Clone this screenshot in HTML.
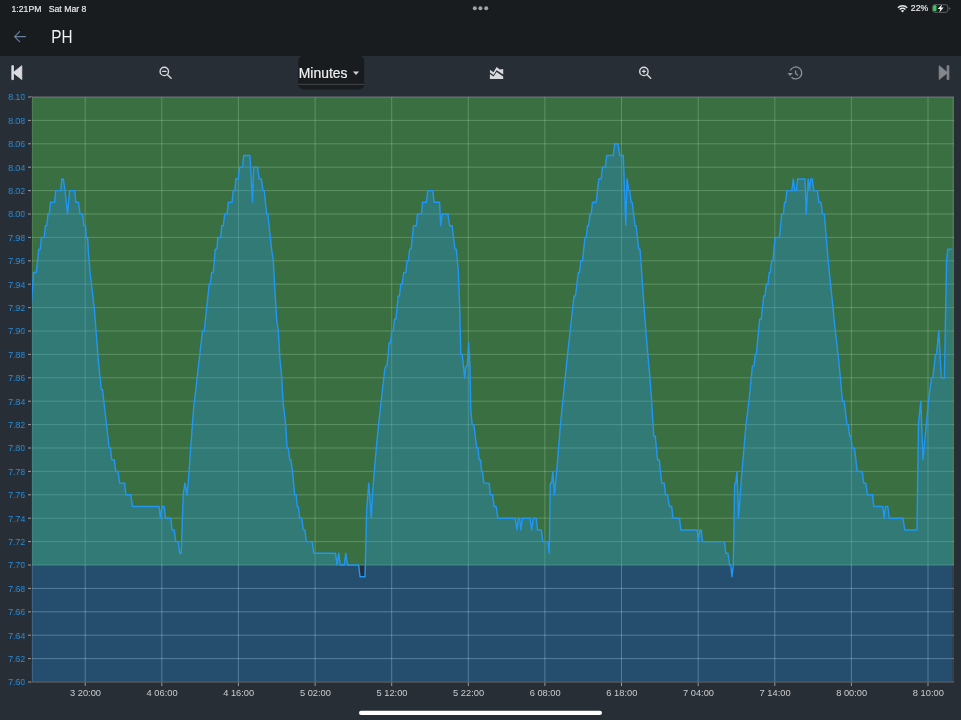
<!DOCTYPE html>
<html><head><meta charset="utf-8"><style>
html,body{margin:0;padding:0;width:961px;height:720px;overflow:hidden;background:#282e35;}
body{position:relative;font-family:"Liberation Sans",sans-serif;}
svg{position:absolute;left:0;top:0;will-change:transform;}
text{opacity:0.999;}
</style></head><body>
<svg width="961" height="720" viewBox="0 0 961 720">
<defs>
<clipPath id="plot"><rect x="32" y="97" width="922" height="585"/></clipPath>
<clipPath id="upper"><rect x="32" y="97" width="922" height="468"/></clipPath>
<clipPath id="lower"><rect x="32" y="565" width="922" height="117"/></clipPath>
</defs>
<rect x="0" y="0" width="961" height="56" fill="#181c1f"/>
<!-- status bar -->
<text x="11.5" y="11.5" font-size="8.7" fill="#e8e8e8" stroke="#e8e8e8" stroke-width="0.18">1:21PM</text>
<text x="48.7" y="11.5" font-size="8.7" fill="#e8e8e8" stroke="#e8e8e8" stroke-width="0.18">Sat Mar 8</text>
<circle cx="474.8" cy="8.3" r="2" fill="#a0a4a8"/><circle cx="480.4" cy="8.3" r="2" fill="#a0a4a8"/><circle cx="486.2" cy="8.3" r="2" fill="#a0a4a8"/>
<!-- header -->
<path d="M25.5,36.6 H14.6 M19.6,31.6 L14.6,36.6 L19.6,41.6" fill="none" stroke="#6a819b" stroke-width="1.2" stroke-linecap="round" stroke-linejoin="round"/>
<text x="51.3" y="43.1" font-size="18" fill="#f2f2f2" textLength="21.2" lengthAdjust="spacingAndGlyphs">PH</text>
<!-- status right -->
<g fill="none" stroke="#e8e8e8" stroke-width="1.4">
<path d="M897.9,7.7 A6.6,6.6 0 0 1 907.2,7.7"/>
<path d="M899.65,9.5 A4.1,4.1 0 0 1 905.45,9.5"/>
</g>
<path d="M902.55,12.4 L900.9,10.75 A2.3,2.3 0 0 1 904.2,10.75 Z" fill="#e8e8e8"/>
<text x="910.8" y="11.4" font-size="8.7" fill="#e8e8e8" stroke="#e8e8e8" stroke-width="0.18">22%</text>
<rect x="932.6" y="4.6" width="15.3" height="7.8" rx="2.3" fill="none" stroke="#5c5f63" stroke-width="1"/>
<path d="M949,7.2 L950.9,8.45 L949,9.7 Z" fill="#5c5f63"/>
<rect x="933.1" y="5.2" width="3.4" height="6" rx="1" fill="#34c759"/>
<path d="M942.4,3.9 L937.7,9 L940.3,9 L939.1,12.7 L943.6,7.5 L941,7.5 Z" fill="#f8f8f8" stroke="#181c1f" stroke-width="0.7" paint-order="stroke" stroke-linejoin="round"/>
<!-- toolbar -->
<rect x="0" y="56" width="961" height="41" fill="#282e35"/>
<path d="M11.8,65.7 H13.5 V79.6 H11.8 Z M13,72.65 L21.8,65.7 V79.6 Z" fill="#dcdce2" stroke="#dcdce2" stroke-width="0.8" stroke-linejoin="round"/>
<g fill="none" stroke="#d8d8dc" stroke-width="1.4" stroke-linecap="round">
<circle cx="164.3" cy="71.4" r="4.2"/><path d="M167.3,74.4 L171.1,78.2"/><path d="M162.7,71.4 H165.9" stroke-width="1.4"/>
<circle cx="643.9" cy="71.4" r="4.2"/><path d="M646.9,74.4 L650.7,78.2"/><path d="M642.4,71.4 H645.4 M643.9,69.9 V72.9" stroke-width="1.1"/>
</g>
<path d="M489.9,69.7 L493.5,72.3 L496.6,66.9 L499.8,69.4 L503.2,68.9 L503.2,74.6 L496.6,70.2 L493.5,75 L489.9,72.4 Z M489.9,73.9 L493.5,76.5 L496.6,71.9 L503.2,76.5 L503.2,79 L489.9,79 Z" fill="#d8d8de"/>
<g fill="none" stroke="#8d9094" stroke-width="1.3">
<path d="M790.2,70.6 A6,6 0 1 1 791.5,77.2"/>
<path d="M795.6,70.4 V73.5 L798,75.4"/>
</g>
<path d="M787.5,73 L792.8,73 L790.1,75.9 Z" fill="#8d9094"/>
<path d="M939.2,65.7 L947.6,72.65 L939.2,79.6 Z M947.1,65.7 H948.9 V79.6 H947.1 Z" fill="#84878c" stroke="#84878c" stroke-width="0.8" stroke-linejoin="round"/>
<!-- dropdown -->
<rect x="298.3" y="56" width="65.8" height="33.5" rx="5" fill="#181c1f"/>
<rect x="298.3" y="83.8" width="65.8" height="1" fill="#45484d"/>
<text x="298.8" y="77.9" font-size="13.9" fill="#f0f0f0" stroke="#f0f0f0" stroke-width="0.2">Minutes</text>
<path d="M352.9,71.5 L359.1,71.5 L356,75 Z" fill="#d0d0d0"/>
<!-- plot -->
<g stroke="rgba(255,255,255,0.33)" stroke-width="1"><line x1="32" y1="97" x2="954" y2="97"/><line x1="32" y1="120.4" x2="954" y2="120.4"/><line x1="32" y1="143.8" x2="954" y2="143.8"/><line x1="32" y1="167.2" x2="954" y2="167.2"/><line x1="32" y1="190.6" x2="954" y2="190.6"/><line x1="32" y1="214" x2="954" y2="214"/><line x1="32" y1="237.4" x2="954" y2="237.4"/><line x1="32" y1="260.8" x2="954" y2="260.8"/><line x1="32" y1="284.2" x2="954" y2="284.2"/><line x1="32" y1="307.6" x2="954" y2="307.6"/><line x1="32" y1="331" x2="954" y2="331"/><line x1="32" y1="354.4" x2="954" y2="354.4"/><line x1="32" y1="377.8" x2="954" y2="377.8"/><line x1="32" y1="401.2" x2="954" y2="401.2"/><line x1="32" y1="424.6" x2="954" y2="424.6"/><line x1="32" y1="448" x2="954" y2="448"/><line x1="32" y1="471.4" x2="954" y2="471.4"/><line x1="32" y1="494.8" x2="954" y2="494.8"/><line x1="32" y1="518.2" x2="954" y2="518.2"/><line x1="32" y1="541.6" x2="954" y2="541.6"/><line x1="32" y1="565" x2="954" y2="565"/><line x1="32" y1="588.4" x2="954" y2="588.4"/><line x1="32" y1="611.8" x2="954" y2="611.8"/><line x1="32" y1="635.2" x2="954" y2="635.2"/><line x1="32" y1="658.6" x2="954" y2="658.6"/><line x1="32" y1="682" x2="954" y2="682"/><line x1="85.2" y1="97" x2="85.2" y2="682"/><line x1="161.8" y1="97" x2="161.8" y2="682"/><line x1="238.4" y1="97" x2="238.4" y2="682"/><line x1="315.1" y1="97" x2="315.1" y2="682"/><line x1="391.7" y1="97" x2="391.7" y2="682"/><line x1="468.3" y1="97" x2="468.3" y2="682"/><line x1="544.9" y1="97" x2="544.9" y2="682"/><line x1="621.5" y1="97" x2="621.5" y2="682"/><line x1="698.2" y1="97" x2="698.2" y2="682"/><line x1="774.8" y1="97" x2="774.8" y2="682"/><line x1="851.4" y1="97" x2="851.4" y2="682"/><line x1="928" y1="97" x2="928" y2="682"/><line x1="32.5" y1="97" x2="32.5" y2="682" stroke="rgba(255,255,255,0.15)"/></g>
<rect x="32" y="97" width="922" height="468" fill="rgba(76,175,80,0.5)"/>
<g clip-path="url(#plot)">
<path d="M31,310 L33.5,272.5 L36.3,272.5 L38.8,249.1 L40.4,249.1 L41.3,237.4 L44.3,237.4 L45.4,225.7 L46.8,225.7 L48,214 L49.4,214 L50.5,202.3 L54.6,202.3 L55.7,190.6 L60.8,190.6 L61.8,178.9 L63.3,178.9 L65,190.6 L67.5,214 L69.6,190.6 L74.7,190.6 L75.8,202.3 L78.6,202.3 L80,214 L82.5,214 L83.9,225.7 L85.6,225.7 L86.2,237.4 L87.6,237.4 L88.3,250 L90,272 L94.2,307.5 L98.3,360 L101.3,389.5 L102.5,389.5 L109.2,448 L110.5,448 L111.7,459.7 L114.2,459.7 L115.8,471.4 L118,471.4 L119.7,483.1 L124.7,483.1 L125.8,494.8 L130.8,494.8 L132.5,506.5 L159.2,506.5 L160.3,518.2 L162,506.5 L164.2,506.5 L165.5,518.2 L170.8,518.2 L172,529.9 L174.2,529.9 L175.8,541.6 L178.3,541.6 L179.7,553.3 L181.2,553.3 L183.3,493.3 L185,483.1 L187,494.8 L188.3,481.7 L190.8,446.7 L193.3,411.7 L198,370 L202.5,331 L204.2,331 L209.2,284.2 L210.3,284.2 L211.7,272.5 L213.3,272.5 L215.3,249.1 L217,249.1 L217.8,237.4 L220.8,237.4 L221.7,225.7 L223.3,225.7 L224.7,214 L227,214 L228.3,202.3 L232,202.3 L233.3,190.6 L235,190.6 L235.8,178.9 L238.3,178.9 L239.5,167.2 L242.5,167.2 L243.7,155.5 L250,155.5 L252.5,202 L253.7,167.2 L257.5,167.2 L259.2,178.9 L261.3,178.9 L263,190.6 L264.2,190.6 L266.7,214 L267.8,214 L271.7,250 L273.3,260.5 L275,291.7 L276.7,320 L278.3,331 L280,360 L281.7,376.7 L283,401.7 L285.8,425 L287,448 L288.3,448 L289.7,459.7 L290.8,459.7 L292.5,471.4 L294.7,494.8 L296.2,494.8 L297.2,506.5 L298.3,506.5 L299.7,518.2 L301.7,518.2 L303.3,529.9 L305,529.9 L306.2,541.6 L312.2,541.6 L313.8,553.3 L335.5,553.3 L337,565 L338.7,553.3 L340.3,565 L344.2,565 L345.8,553.3 L347.5,565 L358.7,565 L360,576.7 L365,576.7 L366.7,510 L368.8,483.1 L371.3,518 L372.5,493.3 L375,463 L377.5,435 L380,411.7 L384.7,370 L385.8,366.1 L387,366.1 L389.2,342.7 L390.5,342.7 L391.7,331 L393.3,331 L394.5,319.3 L395.8,319.3 L398.3,295.9 L399.5,295.9 L400.8,284.2 L402.2,284.2 L403.7,272.5 L405.8,272.5 L407,260.8 L408.5,260.8 L409.7,249.1 L411.1,249.1 L413.5,225.7 L416.4,225.7 L417.4,214 L421.5,214 L422.5,202.3 L426.4,202.3 L427.8,190.6 L432.9,190.6 L434,202.3 L439.6,202.3 L440.6,225.7 L442.1,214 L447.9,214 L449.6,225.7 L452.1,225.7 L454.9,249.1 L456.3,249.1 L458.3,270.8 L459.7,308.3 L460.8,354.4 L462.2,354.4 L464.7,377.8 L465.8,366.1 L467.2,366.1 L468.7,342.7 L470,366.7 L470.8,410 L472.2,424.6 L473.8,424.6 L476.7,448 L478,448 L479.2,459.7 L480.5,459.7 L481.7,471.4 L482.5,471.4 L483.8,483.1 L489.2,483.1 L490.3,494.8 L492.5,494.8 L494.2,506.5 L496.2,506.5 L497.8,518.2 L515.3,518.2 L517,529.9 L518.3,518.2 L519.7,518.2 L520.8,529.9 L522.5,518.2 L530,518.2 L531.7,529.9 L533.3,518.2 L536.3,518.2 L537.5,529.9 L541.3,529.9 L542.8,541.6 L548,541.6 L549.2,553.3 L550.3,483.1 L551.7,483.1 L552.8,471.4 L554.5,494.8 L556.7,471.4 L558.5,449 L560.4,425 L567.3,357 L574,295.9 L575.5,295.9 L578.3,272.5 L579.5,272.5 L580.8,260.8 L582.5,260.8 L585,237.4 L586.3,237.4 L587.5,225.7 L588.7,225.7 L590,214 L591.2,214 L592.5,202.3 L596.2,202.3 L598.8,178.9 L601.2,178.9 L602.5,167.2 L605.3,167.2 L606.7,155.5 L613.3,155.5 L614.7,143.8 L618,143.8 L619.7,155.5 L623.3,155.5 L625.8,225.5 L627,178.9 L628.9,190.6 L629.7,190.6 L631.1,202.3 L632.2,202.3 L635,225.7 L636.1,225.7 L638.7,249.1 L640,249.1 L642.5,285 L645,320 L648.3,360 L649.7,375 L651.7,401.7 L653.8,436.3 L655.3,436.3 L657.5,459.7 L659.2,459.7 L661.7,483.1 L664.2,483.1 L665.5,494.8 L667.5,494.8 L669.5,506.5 L671.7,506.5 L673,518.2 L679.5,518.2 L680.8,529.9 L697.2,529.9 L698.3,541.6 L700,529.9 L701.2,529.9 L702.5,541.6 L724.5,541.6 L725.8,553.3 L728,553.3 L729.7,565 L730.8,565 L732,576.7 L733.3,565 L734.7,483.1 L735.8,483.1 L737,471.4 L738.5,518 L741.9,472 L745.8,427 L749.8,393 L752.4,366.1 L754,366.1 L755.2,354.4 L756.3,354.4 L759.7,319.3 L761.2,319.3 L763.7,295.9 L765,295.9 L766.3,284.2 L768,284.2 L769.2,272.5 L770.3,272.5 L771.7,260.8 L772.9,260.8 L775.1,237.4 L779.5,237.4 L781.7,214 L783.4,214 L784.6,202.3 L785.6,202.3 L786.8,190.6 L791.9,190.6 L793.3,178.9 L794.8,190.6 L796.3,190.6 L797.7,178.9 L805,178.9 L806.2,214 L808.2,178.9 L809.4,190.6 L810.8,178.9 L812.3,178.9 L813.7,190.6 L817.4,190.6 L818.9,202.3 L821,202.3 L822.5,214 L824.3,214 L828.3,261.7 L831.7,295 L835,328.3 L838.7,360 L842.5,401.2 L844.2,401.2 L847,424.6 L848.3,424.6 L849.7,436.3 L850.8,436.3 L852.2,448 L854.5,448 L857.2,471.4 L862.2,471.4 L863.7,483.1 L865.8,483.1 L867.5,494.8 L872.5,494.8 L873.8,506.5 L882.8,506.5 L884.2,518.2 L885.5,506.5 L887.8,506.5 L889.2,518.2 L903,518.2 L904.7,529.9 L917,529.9 L918.5,423.3 L920.8,401.2 L923,459.7 L926.7,420 L928.5,401.2 L931.5,377.8 L932.8,377.8 L935.5,354.4 L936.5,354.4 L938.8,331 L941.3,377.8 L944.4,377.8 L946.6,260.8 L947.8,249.1 L952.3,249.1 L952.3,682 L31,682 Z" fill="#2196f3" fill-opacity="0.3"/>
</g>
<g stroke="#9a9a9a" stroke-width="1"><line x1="28" y1="97" x2="32" y2="97"/><line x1="28" y1="120.4" x2="32" y2="120.4"/><line x1="28" y1="143.8" x2="32" y2="143.8"/><line x1="28" y1="167.2" x2="32" y2="167.2"/><line x1="28" y1="190.6" x2="32" y2="190.6"/><line x1="28" y1="214" x2="32" y2="214"/><line x1="28" y1="237.4" x2="32" y2="237.4"/><line x1="28" y1="260.8" x2="32" y2="260.8"/><line x1="28" y1="284.2" x2="32" y2="284.2"/><line x1="28" y1="307.6" x2="32" y2="307.6"/><line x1="28" y1="331" x2="32" y2="331"/><line x1="28" y1="354.4" x2="32" y2="354.4"/><line x1="28" y1="377.8" x2="32" y2="377.8"/><line x1="28" y1="401.2" x2="32" y2="401.2"/><line x1="28" y1="424.6" x2="32" y2="424.6"/><line x1="28" y1="448" x2="32" y2="448"/><line x1="28" y1="471.4" x2="32" y2="471.4"/><line x1="28" y1="494.8" x2="32" y2="494.8"/><line x1="28" y1="518.2" x2="32" y2="518.2"/><line x1="28" y1="541.6" x2="32" y2="541.6"/><line x1="28" y1="565" x2="32" y2="565"/><line x1="28" y1="588.4" x2="32" y2="588.4"/><line x1="28" y1="611.8" x2="32" y2="611.8"/><line x1="28" y1="635.2" x2="32" y2="635.2"/><line x1="28" y1="658.6" x2="32" y2="658.6"/><line x1="28" y1="682" x2="32" y2="682"/><line x1="85.2" y1="682" x2="85.2" y2="686"/><line x1="161.8" y1="682" x2="161.8" y2="686"/><line x1="238.4" y1="682" x2="238.4" y2="686"/><line x1="315.1" y1="682" x2="315.1" y2="686"/><line x1="391.7" y1="682" x2="391.7" y2="686"/><line x1="468.3" y1="682" x2="468.3" y2="686"/><line x1="544.9" y1="682" x2="544.9" y2="686"/><line x1="621.5" y1="682" x2="621.5" y2="686"/><line x1="698.2" y1="682" x2="698.2" y2="686"/><line x1="774.8" y1="682" x2="774.8" y2="686"/><line x1="851.4" y1="682" x2="851.4" y2="686"/><line x1="928" y1="682" x2="928" y2="686"/></g>
<g clip-path="url(#plot)"><path d="M31,310 L33.5,272.5 L36.3,272.5 L38.8,249.1 L40.4,249.1 L41.3,237.4 L44.3,237.4 L45.4,225.7 L46.8,225.7 L48,214 L49.4,214 L50.5,202.3 L54.6,202.3 L55.7,190.6 L60.8,190.6 L61.8,178.9 L63.3,178.9 L65,190.6 L67.5,214 L69.6,190.6 L74.7,190.6 L75.8,202.3 L78.6,202.3 L80,214 L82.5,214 L83.9,225.7 L85.6,225.7 L86.2,237.4 L87.6,237.4 L88.3,250 L90,272 L94.2,307.5 L98.3,360 L101.3,389.5 L102.5,389.5 L109.2,448 L110.5,448 L111.7,459.7 L114.2,459.7 L115.8,471.4 L118,471.4 L119.7,483.1 L124.7,483.1 L125.8,494.8 L130.8,494.8 L132.5,506.5 L159.2,506.5 L160.3,518.2 L162,506.5 L164.2,506.5 L165.5,518.2 L170.8,518.2 L172,529.9 L174.2,529.9 L175.8,541.6 L178.3,541.6 L179.7,553.3 L181.2,553.3 L183.3,493.3 L185,483.1 L187,494.8 L188.3,481.7 L190.8,446.7 L193.3,411.7 L198,370 L202.5,331 L204.2,331 L209.2,284.2 L210.3,284.2 L211.7,272.5 L213.3,272.5 L215.3,249.1 L217,249.1 L217.8,237.4 L220.8,237.4 L221.7,225.7 L223.3,225.7 L224.7,214 L227,214 L228.3,202.3 L232,202.3 L233.3,190.6 L235,190.6 L235.8,178.9 L238.3,178.9 L239.5,167.2 L242.5,167.2 L243.7,155.5 L250,155.5 L252.5,202 L253.7,167.2 L257.5,167.2 L259.2,178.9 L261.3,178.9 L263,190.6 L264.2,190.6 L266.7,214 L267.8,214 L271.7,250 L273.3,260.5 L275,291.7 L276.7,320 L278.3,331 L280,360 L281.7,376.7 L283,401.7 L285.8,425 L287,448 L288.3,448 L289.7,459.7 L290.8,459.7 L292.5,471.4 L294.7,494.8 L296.2,494.8 L297.2,506.5 L298.3,506.5 L299.7,518.2 L301.7,518.2 L303.3,529.9 L305,529.9 L306.2,541.6 L312.2,541.6 L313.8,553.3 L335.5,553.3 L337,565 L338.7,553.3 L340.3,565 L344.2,565 L345.8,553.3 L347.5,565 L358.7,565 L360,576.7 L365,576.7 L366.7,510 L368.8,483.1 L371.3,518 L372.5,493.3 L375,463 L377.5,435 L380,411.7 L384.7,370 L385.8,366.1 L387,366.1 L389.2,342.7 L390.5,342.7 L391.7,331 L393.3,331 L394.5,319.3 L395.8,319.3 L398.3,295.9 L399.5,295.9 L400.8,284.2 L402.2,284.2 L403.7,272.5 L405.8,272.5 L407,260.8 L408.5,260.8 L409.7,249.1 L411.1,249.1 L413.5,225.7 L416.4,225.7 L417.4,214 L421.5,214 L422.5,202.3 L426.4,202.3 L427.8,190.6 L432.9,190.6 L434,202.3 L439.6,202.3 L440.6,225.7 L442.1,214 L447.9,214 L449.6,225.7 L452.1,225.7 L454.9,249.1 L456.3,249.1 L458.3,270.8 L459.7,308.3 L460.8,354.4 L462.2,354.4 L464.7,377.8 L465.8,366.1 L467.2,366.1 L468.7,342.7 L470,366.7 L470.8,410 L472.2,424.6 L473.8,424.6 L476.7,448 L478,448 L479.2,459.7 L480.5,459.7 L481.7,471.4 L482.5,471.4 L483.8,483.1 L489.2,483.1 L490.3,494.8 L492.5,494.8 L494.2,506.5 L496.2,506.5 L497.8,518.2 L515.3,518.2 L517,529.9 L518.3,518.2 L519.7,518.2 L520.8,529.9 L522.5,518.2 L530,518.2 L531.7,529.9 L533.3,518.2 L536.3,518.2 L537.5,529.9 L541.3,529.9 L542.8,541.6 L548,541.6 L549.2,553.3 L550.3,483.1 L551.7,483.1 L552.8,471.4 L554.5,494.8 L556.7,471.4 L558.5,449 L560.4,425 L567.3,357 L574,295.9 L575.5,295.9 L578.3,272.5 L579.5,272.5 L580.8,260.8 L582.5,260.8 L585,237.4 L586.3,237.4 L587.5,225.7 L588.7,225.7 L590,214 L591.2,214 L592.5,202.3 L596.2,202.3 L598.8,178.9 L601.2,178.9 L602.5,167.2 L605.3,167.2 L606.7,155.5 L613.3,155.5 L614.7,143.8 L618,143.8 L619.7,155.5 L623.3,155.5 L625.8,225.5 L627,178.9 L628.9,190.6 L629.7,190.6 L631.1,202.3 L632.2,202.3 L635,225.7 L636.1,225.7 L638.7,249.1 L640,249.1 L642.5,285 L645,320 L648.3,360 L649.7,375 L651.7,401.7 L653.8,436.3 L655.3,436.3 L657.5,459.7 L659.2,459.7 L661.7,483.1 L664.2,483.1 L665.5,494.8 L667.5,494.8 L669.5,506.5 L671.7,506.5 L673,518.2 L679.5,518.2 L680.8,529.9 L697.2,529.9 L698.3,541.6 L700,529.9 L701.2,529.9 L702.5,541.6 L724.5,541.6 L725.8,553.3 L728,553.3 L729.7,565 L730.8,565 L732,576.7 L733.3,565 L734.7,483.1 L735.8,483.1 L737,471.4 L738.5,518 L741.9,472 L745.8,427 L749.8,393 L752.4,366.1 L754,366.1 L755.2,354.4 L756.3,354.4 L759.7,319.3 L761.2,319.3 L763.7,295.9 L765,295.9 L766.3,284.2 L768,284.2 L769.2,272.5 L770.3,272.5 L771.7,260.8 L772.9,260.8 L775.1,237.4 L779.5,237.4 L781.7,214 L783.4,214 L784.6,202.3 L785.6,202.3 L786.8,190.6 L791.9,190.6 L793.3,178.9 L794.8,190.6 L796.3,190.6 L797.7,178.9 L805,178.9 L806.2,214 L808.2,178.9 L809.4,190.6 L810.8,178.9 L812.3,178.9 L813.7,190.6 L817.4,190.6 L818.9,202.3 L821,202.3 L822.5,214 L824.3,214 L828.3,261.7 L831.7,295 L835,328.3 L838.7,360 L842.5,401.2 L844.2,401.2 L847,424.6 L848.3,424.6 L849.7,436.3 L850.8,436.3 L852.2,448 L854.5,448 L857.2,471.4 L862.2,471.4 L863.7,483.1 L865.8,483.1 L867.5,494.8 L872.5,494.8 L873.8,506.5 L882.8,506.5 L884.2,518.2 L885.5,506.5 L887.8,506.5 L889.2,518.2 L903,518.2 L904.7,529.9 L917,529.9 L918.5,423.3 L920.8,401.2 L923,459.7 L926.7,420 L928.5,401.2 L931.5,377.8 L932.8,377.8 L935.5,354.4 L936.5,354.4 L938.8,331 L941.3,377.8 L944.4,377.8 L946.6,260.8 L947.8,249.1 L952.3,249.1" fill="none" stroke="#2196f3" stroke-width="1.45" stroke-linejoin="round"/></g>
<g fill="#2590e0" font-size="9.8" text-anchor="end" transform="translate(25.3,0) scale(0.9,1) translate(-25,0)"><text x="25" y="100.4">8.10</text><text x="25" y="123.8">8.08</text><text x="25" y="147.2">8.06</text><text x="25" y="170.6">8.04</text><text x="25" y="194">8.02</text><text x="25" y="217.4">8.00</text><text x="25" y="240.8">7.98</text><text x="25" y="264.2">7.96</text><text x="25" y="287.6">7.94</text><text x="25" y="311">7.92</text><text x="25" y="334.4">7.90</text><text x="25" y="357.8">7.88</text><text x="25" y="381.2">7.86</text><text x="25" y="404.6">7.84</text><text x="25" y="428">7.82</text><text x="25" y="451.4">7.80</text><text x="25" y="474.8">7.78</text><text x="25" y="498.2">7.76</text><text x="25" y="521.6">7.74</text><text x="25" y="545">7.72</text><text x="25" y="568.4">7.70</text><text x="25" y="591.8">7.68</text><text x="25" y="615.2">7.66</text><text x="25" y="638.6">7.64</text><text x="25" y="662">7.62</text><text x="25" y="685.4">7.60</text></g>
<g fill="#cacccf" font-size="9.8" text-anchor="middle"><text x="85.5" y="695.8" textLength="31" lengthAdjust="spacingAndGlyphs">3 20:00</text><text x="162.1" y="695.8" textLength="31" lengthAdjust="spacingAndGlyphs">4 06:00</text><text x="238.7" y="695.8" textLength="31" lengthAdjust="spacingAndGlyphs">4 16:00</text><text x="315.4" y="695.8" textLength="31" lengthAdjust="spacingAndGlyphs">5 02:00</text><text x="392" y="695.8" textLength="31" lengthAdjust="spacingAndGlyphs">5 12:00</text><text x="468.6" y="695.8" textLength="31" lengthAdjust="spacingAndGlyphs">5 22:00</text><text x="545.2" y="695.8" textLength="31" lengthAdjust="spacingAndGlyphs">6 08:00</text><text x="621.8" y="695.8" textLength="31" lengthAdjust="spacingAndGlyphs">6 18:00</text><text x="698.5" y="695.8" textLength="31" lengthAdjust="spacingAndGlyphs">7 04:00</text><text x="775.1" y="695.8" textLength="31" lengthAdjust="spacingAndGlyphs">7 14:00</text><text x="851.7" y="695.8" textLength="31" lengthAdjust="spacingAndGlyphs">8 00:00</text><text x="928.3" y="695.8" textLength="31" lengthAdjust="spacingAndGlyphs">8 10:00</text></g>
<line x1="31.5" y1="97" x2="31.5" y2="682.5" stroke="#2f333a" stroke-width="1"/>
<line x1="31" y1="682" x2="954" y2="682" stroke="#464a50" stroke-width="1"/>
<line x1="953.2" y1="97" x2="953.2" y2="682" stroke="rgba(255,255,255,0.1)" stroke-width="1.4"/>
<rect x="359" y="710.8" width="243" height="4.2" rx="2.1" fill="#ffffff"/>
</svg>
</body></html>
